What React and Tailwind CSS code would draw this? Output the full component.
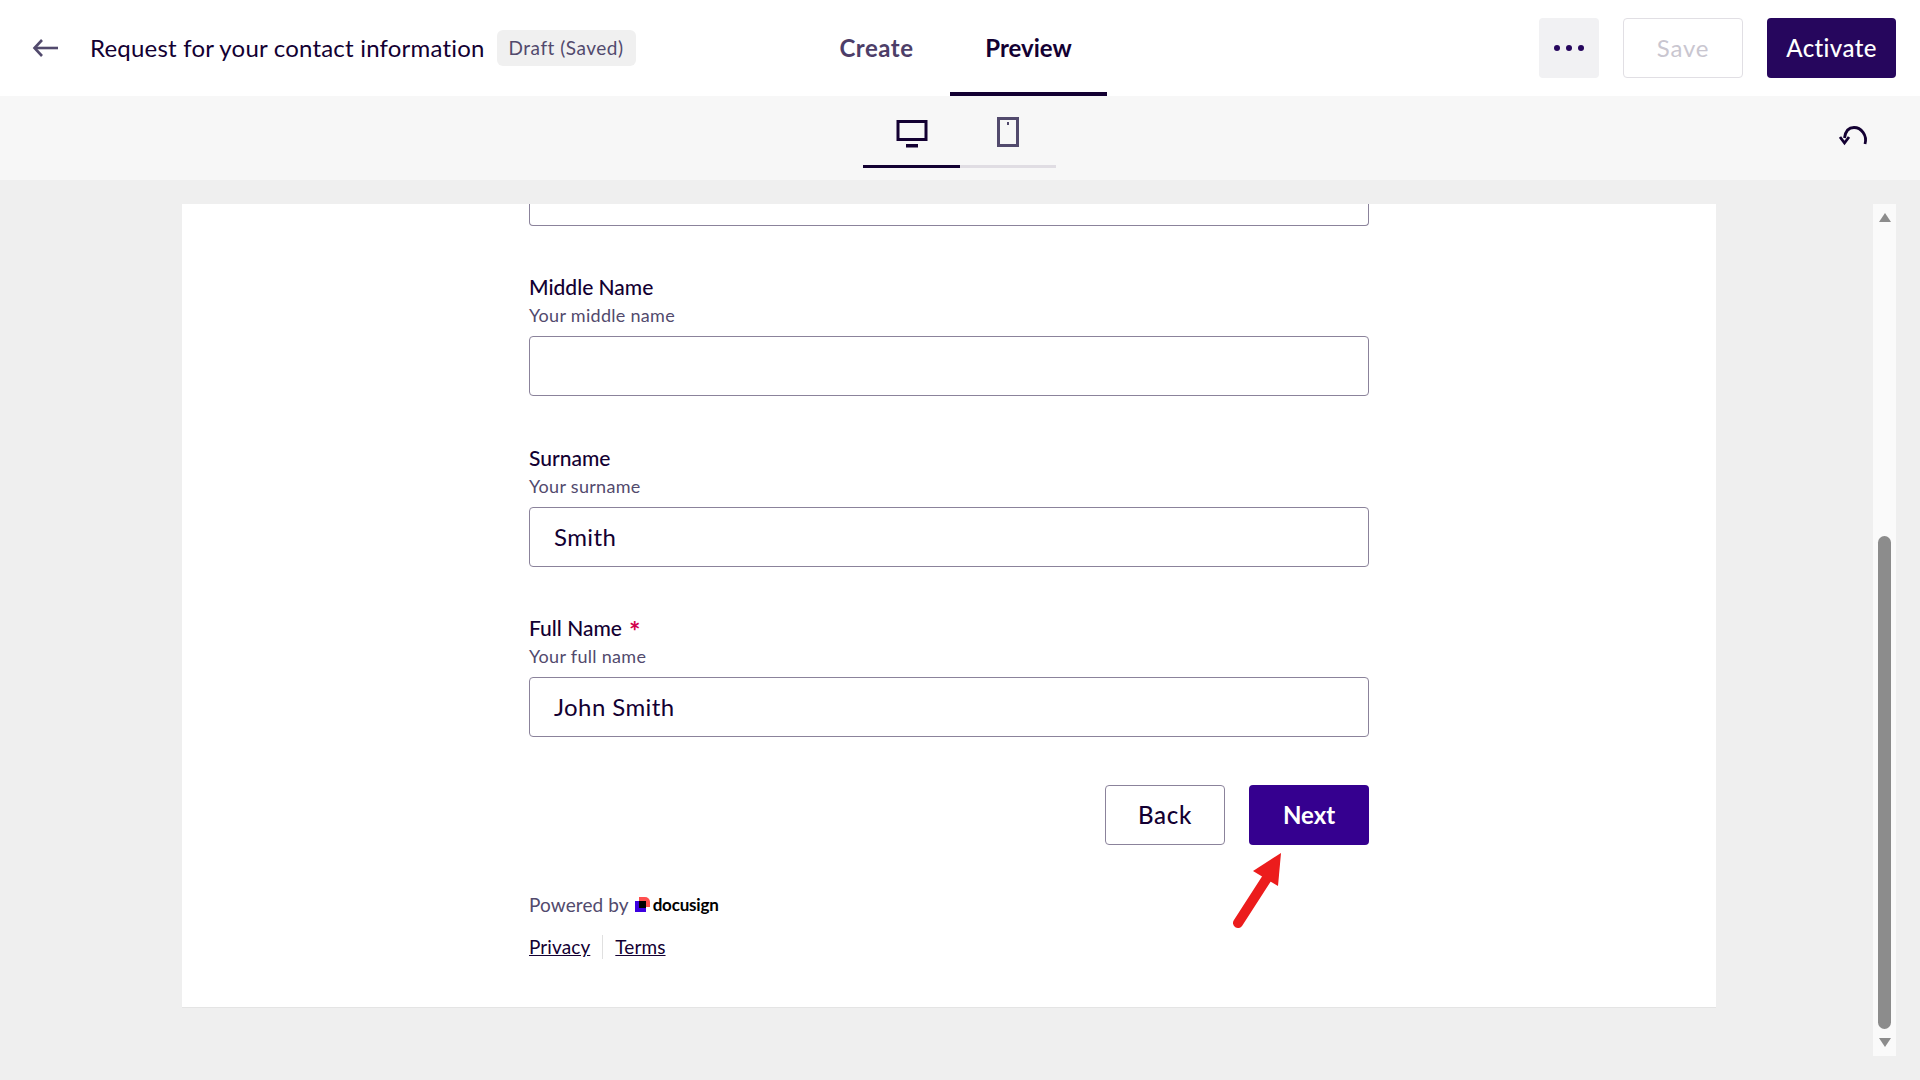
import React from 'react';

const font = { fontFamily: 'Lato, "Noto Sans", sans-serif' };

function Field({ label, hint, value, required }) {
  return (
    <div>
      <div className="text-[21px] leading-[27px] font-medium text-[#130032]">
        {label}
        {required && <span className="inline-block ml-[7px] text-[27px] leading-[0px] translate-y-[5px] text-[#d2004c] font-bold">*</span>}
      </div>
      <div className="mt-[3px] text-[18px] leading-[24px] tracking-[0.3px] text-[#524a6d]">{hint}</div>
      <div className="mt-[9px] h-[60px] rounded-[4px] border border-[#8b839b] bg-white pl-[24px] flex items-center text-[24px] tracking-[0.4px] text-[#130032]">
        {value}
      </div>
    </div>
  );
}

function DocusignLogo() {
  return (
    <svg width="15" height="16" viewBox="0 0 15 16" className="shrink-0">
      <rect x="0" y="4" width="11" height="11" fill="#3d00e0" />
      <path d="M4 0h6a5 5 0 0 1 5 5v5H4z" fill="#ff4f4f" />
      <rect x="4" y="4" width="7" height="7" fill="#000" />
    </svg>
  );
}

export default function App() {
  return (
    <div style={font} className="relative h-screen overflow-hidden bg-[#efefef] flex flex-col">
      {/* Top bar */}
      <header className="h-[96px] bg-white flex items-center shrink-0">
        <div className="w-[803px] flex items-center pl-[32px] shrink-0">
          <svg width="26" height="18" viewBox="0 0 26 18" fill="none" stroke="#524a6d" strokeWidth="2.6" className="shrink-0">
            <path d="M26 9H3" />
            <path d="M10 1L2.5 9L10 17" />
          </svg>
          <span className="ml-[32px] text-[24px] text-[#130032] whitespace-nowrap tracking-[0.2px]">
            Request for your contact information
          </span>
          <span className="ml-[12px] h-[36px] px-[12px] rounded-[6px] bg-[#f0f0f0] flex items-center text-[19px] tracking-[0.5px] text-[#524a6d] whitespace-nowrap">
            Draft (Saved)
          </span>
        </div>
        <div className="flex h-full">
          <div className="w-[147px] h-full flex items-center justify-center text-[24px] font-bold tracking-[0.5px] text-[#4d3e68]">
            Create
          </div>
          <div className="w-[157px] h-full flex items-center justify-center text-[24px] font-bold text-[#130032] border-b-4 border-[#130032] pt-[4px]">
            Preview
          </div>
        </div>
        <div className="flex-1 flex justify-end items-center gap-[24px] pr-[24px]">
          <div className="w-[60px] h-[60px] rounded-[4px] bg-[#f1f1f3] flex items-center justify-center gap-[6px]">
            <span className="w-[6px] h-[6px] rounded-full bg-[#26065d]" />
            <span className="w-[6px] h-[6px] rounded-full bg-[#26065d]" />
            <span className="w-[6px] h-[6px] rounded-full bg-[#26065d]" />
          </div>
          <div className="w-[120px] h-[60px] rounded-[4px] border border-[#e1dfe4] flex items-center justify-center text-[24px] tracking-[0.8px] text-[#c9c6d0]">
            Save
          </div>
          <div className="w-[129px] h-[60px] rounded-[4px] bg-[#26065d] flex items-center justify-center text-[24px] font-medium tracking-[0.4px] text-white">
            Activate
          </div>
        </div>
      </header>

      {/* Device toolbar */}
      <div className="h-[84px] bg-[#f7f7f7] flex shrink-0">
        <div className="w-[863px] shrink-0" />
        <div className="w-[97px] h-[72px] border-b-[3px] border-[#130032] flex items-center justify-center pt-[6px]">
          <svg width="32" height="28" viewBox="0 0 32 28" fill="none">
            <rect x="2" y="1.5" width="28" height="18" stroke="#130032" strokeWidth="3" />
            <rect x="10" y="24" width="12" height="3.5" fill="#130032" />
          </svg>
        </div>
        <div className="w-[96px] h-[72px] border-b-[3px] border-[#e0dde3] flex items-center justify-center pt-[3px]">
          <svg width="22" height="30" viewBox="0 0 22 30" fill="none">
            <rect x="1.5" y="1.5" width="19" height="27" stroke="#524a6d" strokeWidth="3" />
            <rect x="10" y="5" width="2" height="3" fill="#524a6d" />
          </svg>
        </div>
        <div className="flex-1 flex justify-end items-start pr-[50px] pt-[29px]">
          <svg width="32" height="22" viewBox="0 0 32 22" fill="none" stroke="#130032" strokeWidth="2.8">
            <path d="M27 19C29.5 10 23 2.5 16 2.5C11 2.5 7.5 5.5 6.5 13" />
            <path d="M2 12L6.5 18L11 12" />
          </svg>
        </div>
      </div>

      {/* Preview area */}
      <main className="flex items-start pl-[182px] pt-[24px]">
        <div className="w-[1534px] h-[804px] bg-white border-b border-[#e4e4e4] shrink-0 px-[347px]">
          <div className="h-[22px] rounded-b-[4px] border border-t-0 border-[#8b839b]" />
          <div className="mt-[47px] flex flex-col gap-[47.5px]">
            <Field label="Middle Name" hint="Your middle name" value="" />
            <Field label="Surname" hint="Your surname" value="Smith" />
            <Field label="Full Name" hint="Your full name" value="John Smith" required />
          </div>
          <div className="mt-[48px] flex justify-end gap-[24px]">
            <div className="w-[120px] h-[60px] rounded-[4px] border border-[#8b839b] flex items-center justify-center text-[24px] font-medium tracking-[0.7px] text-[#130032]">
              Back
            </div>
            <div className="w-[120px] h-[60px] rounded-[4px] bg-[#35008f] flex items-center justify-center text-[24px] font-bold text-white">
              Next
            </div>
          </div>
          <div className="mt-[47px] h-[26px] flex items-center text-[19px] tracking-[0.1px] text-[#524a6d]">
            Powered by
            <span className="ml-[6px] flex items-center">
              <DocusignLogo />
              <span className="ml-[3px] text-[17px] font-bold text-black tracking-[-0.2px]">docusign</span>
            </span>
          </div>
          <div className="mt-[15px] flex items-center text-[19px] tracking-[0.1px] text-[#130032]">
            <span className="underline">Privacy</span>
            <span className="ml-[12px] w-px h-[24px] bg-[#e0e0e0]" />
            <span className="ml-[12px] underline">Terms</span>
          </div>
        </div>

        {/* Scrollbar */}
        <div className="ml-[157px] w-[23px] h-[852px] bg-[#fafafa] flex flex-col items-center shrink-0">
          <div className="mt-[9px] w-0 h-0 border-x-[6px] border-x-transparent border-b-[9px] border-b-[#8c8c8c]" />
          <div className="mt-[314px] w-[13px] h-[493px] rounded-full bg-[#8c8c8c]" />
          <div className="mt-[9px] w-0 h-0 border-x-[6px] border-x-transparent border-t-[9px] border-t-[#8c8c8c]" />
        </div>
      </main>

      {/* Red annotation arrow */}
      <svg className="absolute left-[1225px] top-[845px]" width="70" height="90" viewBox="0 0 70 90" fill="none">
        <path d="M13 78L42 33" stroke="#ec1c1c" strokeWidth="10" strokeLinecap="round" />
        <path d="M56 8L53 41L28 26Z" fill="#ec1c1c" />
      </svg>
    </div>
  );
}
